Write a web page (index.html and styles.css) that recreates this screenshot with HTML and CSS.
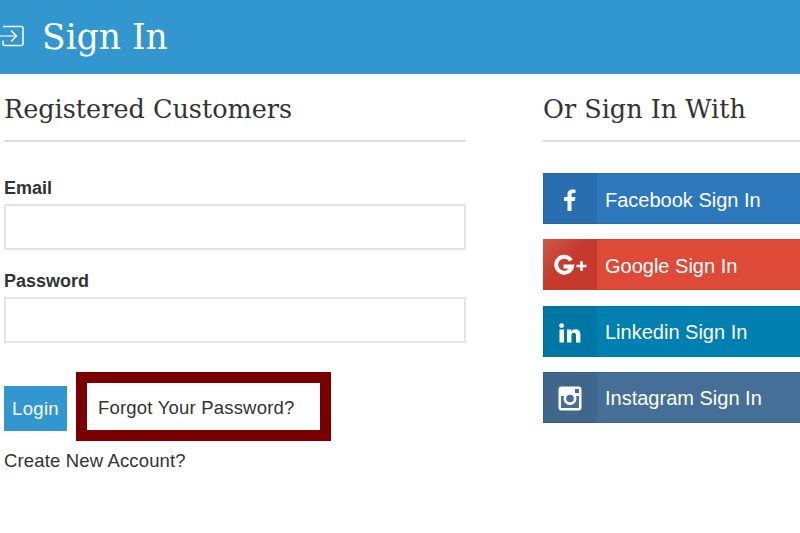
FILE: index.html
```html
<!DOCTYPE html>
<html lang="en">
<head>
  <meta charset="UTF-8" />
  <title>Sign In</title>
  <link rel="stylesheet" href="styles.css">
</head>
<body>
  <header class="page-header">
    <svg class="signin-icon" width="26" height="26" viewBox="0 0 26 26" fill="none" stroke="#fff" stroke-width="1.500">
      <path d="M3 2.500h18a2 2 0 0 1 2 2v15a2 2 0 0 1-2 2H5a2 2 0 0 1-2-2v-3" />
      <path stroke="#cfe6f4" d="M0 12h17" />
      <path d="M11 6.500l5.500 5.500-5.500 5.500" />
    </svg>
    <h1>Sign In</h1>
  </header>

  <main class="columns">
    <section class="login-col">
      <h2>Registered Customers</h2>
      <form class="login-form">
        <label for="email">Email</label>
        <input id="email" type="text">
        <label for="password">Password</label>
        <input id="password" type="password">
        <div class="actions">
          <button type="button" class="login-btn">Login</button>
          <a class="forgot" href="#">Forgot Your Password?</a>
        </div>
        <a class="create" href="#">Create New Account?</a>
      </form>
    </section>

    <section class="social-col">
      <h2>Or Sign In With</h2>
      <div class="social-list">
        <a class="social facebook" href="#">
          <span class="social-icon">
            <svg width="18" height="24" viewBox="0 0 18 24" fill="#fff"><path d="M6.500 23V13H3V9h3.500V6.500C6.500 3 8.500 1.500 11.500 1.500c1.300 0 2.500.1 3 .2V5h-2c-1.600 0-2 .8-2 2v2h3.900l-.5 4h-3.400v10z"/></svg>
          </span>
          <span class="social-label">Facebook Sign In</span>
        </a>
        <a class="social google" href="#">
          <span class="social-icon">
            <svg width="36" height="24" viewBox="0 0 36 24" fill="none" stroke="#fff">
              <path stroke-width="4" d="M19 6.500A8 8 0 1 0 20 12.500H11.500" />
              <path stroke-width="2.600" d="M24.500 12h10M29.500 7v10" />
            </svg>
          </span>
          <span class="social-label">Google Sign In</span>
        </a>
        <a class="social linkedin" href="#">
          <span class="social-icon">
            <svg width="22" height="20" viewBox="0 0 22 20" fill="#fff">
              <circle cx="2.600" cy="2.600" r="2.400" />
              <rect x="0.500" y="6.500" width="4.400" height="13" />
              <path d="M8 6.500h4.200v1.900c.8-1.300 2.300-2.200 4.200-2.200 3.700 0 5 2.300 5 5.800v7.500h-4.400v-6.700c0-1.800-.5-3-2.200-3-1.800 0-2.400 1.300-2.400 3v6.700H8z"/>
            </svg>
          </span>
          <span class="social-label">Linkedin Sign In</span>
        </a>
        <a class="social instagram" href="#">
          <span class="social-icon">
            <svg width="24" height="25" viewBox="0 0 24 25">
              <rect x="0.500" y="0.500" width="23" height="24" rx="3" fill="#fff" />
              <rect x="3" y="10" width="18" height="12" fill="#456f96" />
              <circle cx="12" cy="12.500" r="6.500" fill="#fff" />
              <circle cx="12" cy="12.500" r="3.800" fill="#456f96" />
              <rect x="17" y="3" width="4" height="4" fill="#456f96" />
            </svg>
          </span>
          <span class="social-label">Instagram Sign In</span>
        </a>
      </div>
    </section>
  </main>
</body>
</html>
```

FILE: styles.css
```css
* {
  margin: 0;
  padding: 0;
  box-sizing: border-box;
}

html, body {
  width: 800px;
  height: 533px;
  overflow: hidden;
  background: #fff;
  font-family: "Liberation Sans", Arial, sans-serif;
  color: #333;
}

.page-header {
  height: 74px;
  background: #3397cf;
  display: flex;
  align-items: center;
  gap: 16px;
  color: #fff;
}

.signin-icon {
  overflow: visible;
  flex: none;
}

.page-header h1 {
  font-family: "DejaVu Serif", serif;
  font-weight: 400;
  font-size: 34.500px;
  line-height: 74px;
}

.columns {
  display: grid;
  grid-template-columns: 462px 462px;
  column-gap: 77px;
  padding-left: 4px;
}

h2 {
  font-family: "DejaVu Serif", serif;
  font-weight: 400;
  font-size: 25.500px;
  line-height: 30px;
  color: #333;
  padding: 20px 0 16px;
  border-bottom: 2px solid #ddd;
}

.login-form {
  display: flex;
  flex-direction: column;
  align-items: flex-start;
  padding-top: 36px;
}

.login-form label {
  font-weight: 700;
  font-size: 18px;
  line-height: 20px;
  margin-bottom: 6px;
}

.login-form input {
  width: 462px;
  height: 46px;
  border: 2px solid #e4e4e4;
  background: #fff;
  margin-bottom: 21px;
}

.actions {
  display: flex;
  align-items: flex-start;
  gap: 9px;
  margin-top: 8px;
}

.login-btn {
  width: 63px;
  height: 45px;
  margin-top: 14px;
  border: none;
  background: #3397cf;
  color: #fff;
  font: 18.500px "Liberation Sans", Arial, sans-serif;
  letter-spacing: 0.300px;
}

.forgot {
  width: 255px;
  height: 69px;
  border: 11px solid #7a0000;
  padding-left: 11px;
  line-height: 50px;
  font-size: 18.500px;
  letter-spacing: 0.200px;
  color: #333;
  text-decoration: none;
}

.create {
  font-size: 18.500px;
  letter-spacing: 0.150px;
  line-height: 20px;
  margin-top: 10px;
  color: #333;
  text-decoration: none;
}

.social-list {
  display: flex;
  flex-direction: column;
  gap: 15.330px;
  padding-top: 31px;
}

.social {
  display: flex;
  align-items: center;
  height: 51px;
  color: #fff;
  font-size: 20px;
  text-decoration: none;
  box-shadow: inset 0 0 0 1px rgba(0, 0, 0, 0.08);
}

.social-icon {
  width: 54px;
  height: 51px;
  padding-top: 3px;
  margin-right: 8px;
  display: flex;
  align-items: center;
  justify-content: center;
  background: rgba(0, 0, 0, 0.07);
}

.social-label {
  padding-top: 3px;
}

.google .social-icon {
  background: linear-gradient(135deg, #d0574a 0%, #c53a2c 45%);
}

.facebook { background: #2d77bd; }
.google { background: #dd4a38; }
.linkedin { background: #007fb1; }
.instagram { background: #456f96; }
```
